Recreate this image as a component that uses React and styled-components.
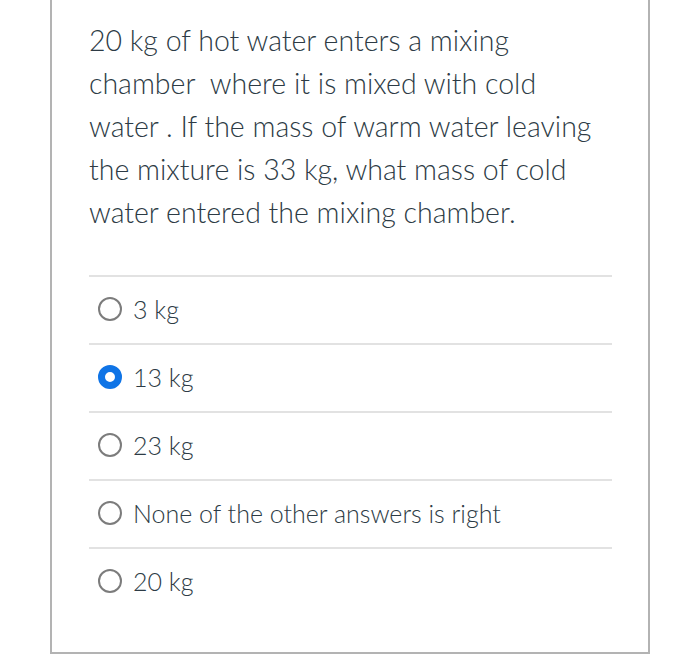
import React, { useState } from "react";
import styled, { createGlobalStyle } from "styled-components";

const GlobalStyle = createGlobalStyle`
  html, body {
    margin: 0;
    padding: 0;
    background: #ffffff;
  }
`;

const Page = styled.div`
  padding: 0 50px 0 50px;
  font-family: Lato, "Open Sans", sans-serif;
  font-weight: 300;
`;

const Panel = styled.div`
  width: 600px;
  box-sizing: border-box;
  border: 2px solid #b3b3b3;
  border-top: none;
  padding: 19px 36px 37px 37px;
  height: 654px;
`;

const Question = styled.div`
  font-size: 28.5px;
  line-height: 43px;
  color: #2d3b45;
  margin-bottom: 41px;
`;

const Options = styled.div`
  display: flex;
  flex-direction: column;
`;

const Option = styled.label`
  display: flex;
  align-items: center;
  gap: 11px;
  box-sizing: border-box;
  height: 68px;
  border-top: 2px solid #e2e2e2;
  padding-left: 9px;
  padding-bottom: 3px;
  font-size: 25px;
  color: #2d3b45;
  cursor: pointer;
`;

const Radio = styled.span`
  width: 24px;
  height: 24px;
  box-sizing: border-box;
  border-radius: 50%;
  flex-shrink: 0;
  border: ${({ checked }) => (checked ? "7px solid #0f74e6" : "2.5px solid #7c7c7c")};
  background: #fff;
`;

const answers = ["3 kg", "13 kg", "23 kg", "None of the other answers is right", "20 kg"];

const App = () => {
  const [selected, setSelected] = useState(1);

  return (
    <Page>
      <GlobalStyle />
      <Panel>
        <Question>
          20 kg of hot water enters a mixing chamber&nbsp; where it is mixed with cold
          water . If the mass of warm water leaving the mixture is 33 kg, what mass of
          cold water entered the mixing chamber.
        </Question>
        <Options>
          {answers.map((a, i) => (
            <Option key={a} onClick={() => setSelected(i)}>
              <Radio checked={selected === i} />
              {a}
            </Option>
          ))}
        </Options>
      </Panel>
    </Page>
  );
};

export default App;
